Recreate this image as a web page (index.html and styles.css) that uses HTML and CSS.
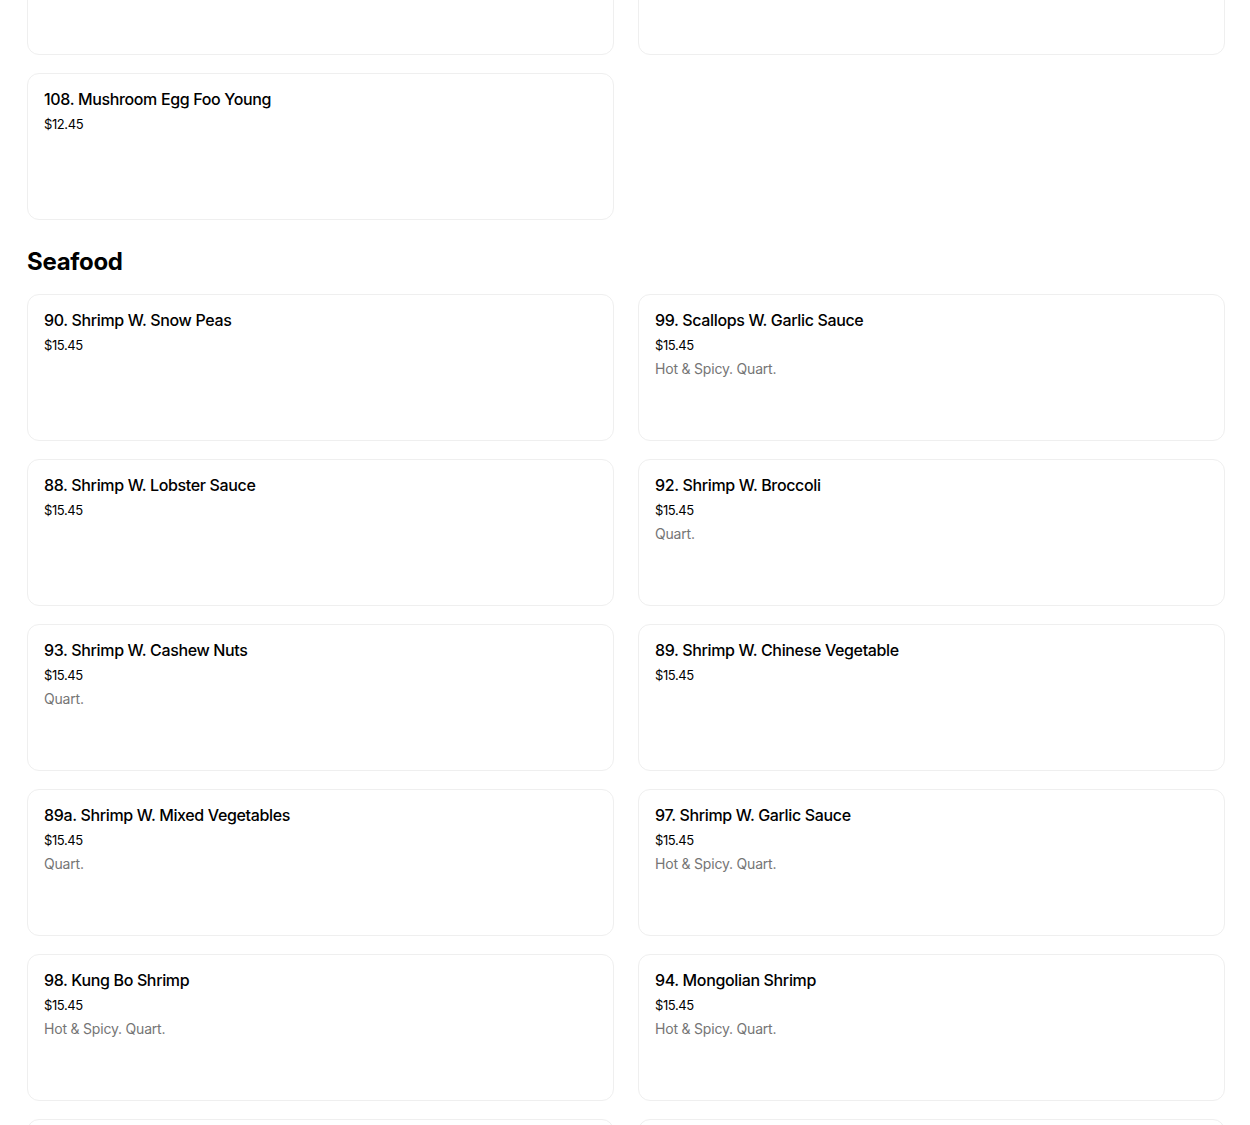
FILE: index.html
```html
<!DOCTYPE html>
<html lang="en">
<head>
<meta charset="utf-8">
<title>Menu</title>
<link rel="stylesheet" href="styles.css">
</head>
<body>
<main class="menu">
  <section class="section section-prev">
    <div class="grid">
      <div class="card"></div>
      <div class="card"></div>
      <div class="card"><div class="title">108. Mushroom Egg Foo Young</div><div class="price">$12.45</div></div>
    </div>
  </section>
  <section class="section">
    <h2 class="section-title">Seafood</h2>
    <div class="grid">
      <div class="card"><div class="title">90. Shrimp W. Snow Peas</div><div class="price">$15.45</div></div>
      <div class="card"><div class="title">99. Scallops W. Garlic Sauce</div><div class="price">$15.45</div><div class="desc">Hot &amp; Spicy. Quart.</div></div>
      <div class="card"><div class="title">88. Shrimp W. Lobster Sauce</div><div class="price">$15.45</div></div>
      <div class="card"><div class="title">92. Shrimp W. Broccoli</div><div class="price">$15.45</div><div class="desc">Quart.</div></div>
      <div class="card"><div class="title">93. Shrimp W. Cashew Nuts</div><div class="price">$15.45</div><div class="desc">Quart.</div></div>
      <div class="card"><div class="title">89. Shrimp W. Chinese Vegetable</div><div class="price">$15.45</div></div>
      <div class="card"><div class="title">89a. Shrimp W. Mixed Vegetables</div><div class="price">$15.45</div><div class="desc">Quart.</div></div>
      <div class="card"><div class="title">97. Shrimp W. Garlic Sauce</div><div class="price">$15.45</div><div class="desc">Hot &amp; Spicy. Quart.</div></div>
      <div class="card"><div class="title">98. Kung Bo Shrimp</div><div class="price">$15.45</div><div class="desc">Hot &amp; Spicy. Quart.</div></div>
      <div class="card"><div class="title">94. Mongolian Shrimp</div><div class="price">$15.45</div><div class="desc">Hot &amp; Spicy. Quart.</div></div>
      <div class="card"></div>
      <div class="card"></div>
    </div>
  </section>
</main>
</body>
</html>
```
FILE: styles.css
```css
html, body {
  margin: 0;
  padding: 0;
  background: #ffffff;
  overflow: hidden;
}
body {
  font-family: Inter, "Noto Sans", "Liberation Sans", sans-serif;
  color: #000000;
}
.menu {
  padding: 0 25px 0 27px;
  margin-top: -92px;
}
.grid {
  display: grid;
  grid-template-columns: 1fr 1fr;
  column-gap: 24px;
  row-gap: 18px;
}
.card {
  box-sizing: border-box;
  height: 147px;
  border: 1px solid #efefef;
  border-radius: 12px;
  padding: 13px 16px 16px 16px;
  background: #ffffff;
}
.title {
  font-size: 16px;
  font-weight: 500;
  line-height: 24px;
  letter-spacing: -0.35px;
}
.price {
  font-size: 13px;
  line-height: 24px;
  margin-top: 1px;
  color: #000000;
  letter-spacing: -0.4px;
}
.desc {
  font-size: 14px;
  line-height: 24px;
  color: #757575;
  letter-spacing: -0.2px;
}
.section-title {
  margin: 0;
  padding: 24px 0 14px 0;
  font-size: 24px;
  line-height: 36px;
  font-weight: 700;
  letter-spacing: -0.3px;
}
```
